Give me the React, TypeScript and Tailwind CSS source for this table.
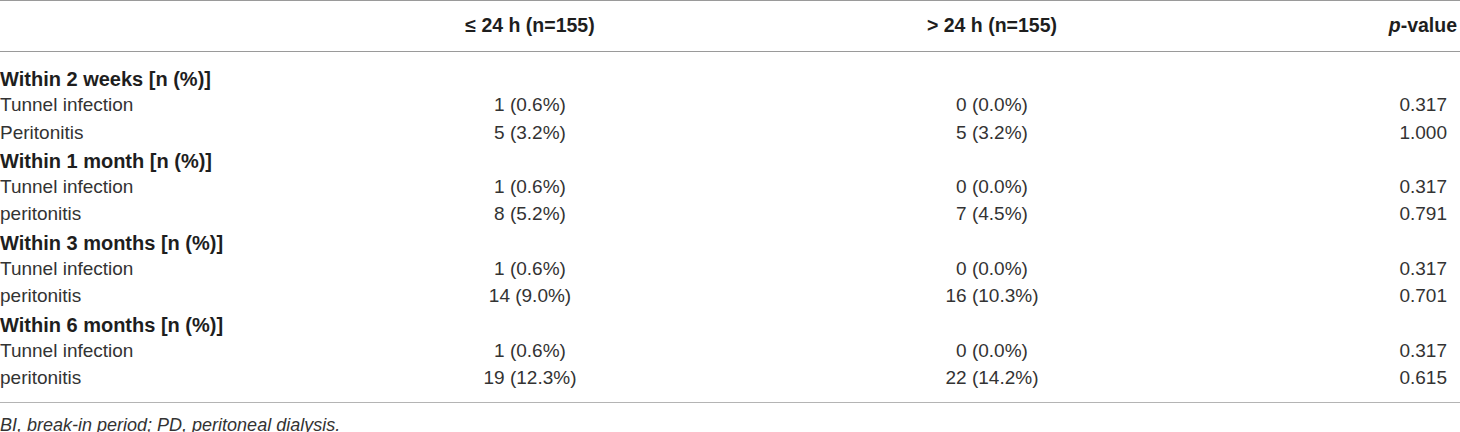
import React from 'react'

type Row = {
  label: string
  early?: string
  late?: string
  p?: string
  group?: boolean
}

const rows: Row[] = [
  { label: 'Within 2 weeks [n (%)]', group: true },
  { label: 'Tunnel infection', early: '1 (0.6%)', late: '0 (0.0%)', p: '0.317' },
  { label: 'Peritonitis', early: '5 (3.2%)', late: '5 (3.2%)', p: '1.000' },
  { label: 'Within 1 month [n (%)]', group: true },
  { label: 'Tunnel infection', early: '1 (0.6%)', late: '0 (0.0%)', p: '0.317' },
  { label: 'peritonitis', early: '8 (5.2%)', late: '7 (4.5%)', p: '0.791' },
  { label: 'Within 3 months [n (%)]', group: true },
  { label: 'Tunnel infection', early: '1 (0.6%)', late: '0 (0.0%)', p: '0.317' },
  { label: 'peritonitis', early: '14 (9.0%)', late: '16 (10.3%)', p: '0.701' },
  { label: 'Within 6 months [n (%)]', group: true },
  { label: 'Tunnel infection', early: '1 (0.6%)', late: '0 (0.0%)', p: '0.317' },
  { label: 'peritonitis', early: '19 (12.3%)', late: '22 (14.2%)', p: '0.615' },
]

const cols = 'grid grid-cols-[300px_460px_464px_1fr]'

export default function App() {
  return (
    <div className="w-[1460px] h-[432px] bg-white font-['Liberation_Sans',Arial,sans-serif] text-[#333]">
      {/* header */}
      <div className={`${cols} h-[52px] items-center border-y border-y-[#9a9a9a] text-[19.5px] font-bold text-[#1e1e1e]`}>
        <div />
        <div className="text-center">≤ 24 h (n=155)</div>
        <div className="text-center">&gt; 24 h (n=155)</div>
        <div className="text-right pr-[3px]">
          <span className="italic">p</span>-value
        </div>
      </div>

      {/* body */}
      <div className="pt-[12px] pb-[10px] border-b border-b-[#b4b4b4]">
        {rows.map((row, i) => (
          <div key={i} className={`${cols} h-[27.3px] items-center text-[19px]`}>
            {row.group ? (
              <div className="col-span-4 font-bold text-[20px] text-[#1e1e1e] whitespace-nowrap">
                {row.label}
              </div>
            ) : (
              <>
                <div>{row.label}</div>
                <div className="text-center">{row.early}</div>
                <div className="text-center">{row.late}</div>
                <div className="text-right pr-[13px]">{row.p}</div>
              </>
            )}
          </div>
        ))}
      </div>

      <div className="pt-[9px] text-[18px] italic text-[#333]">
        BI, break-in period; PD, peritoneal dialysis.
      </div>
    </div>
  )
}
